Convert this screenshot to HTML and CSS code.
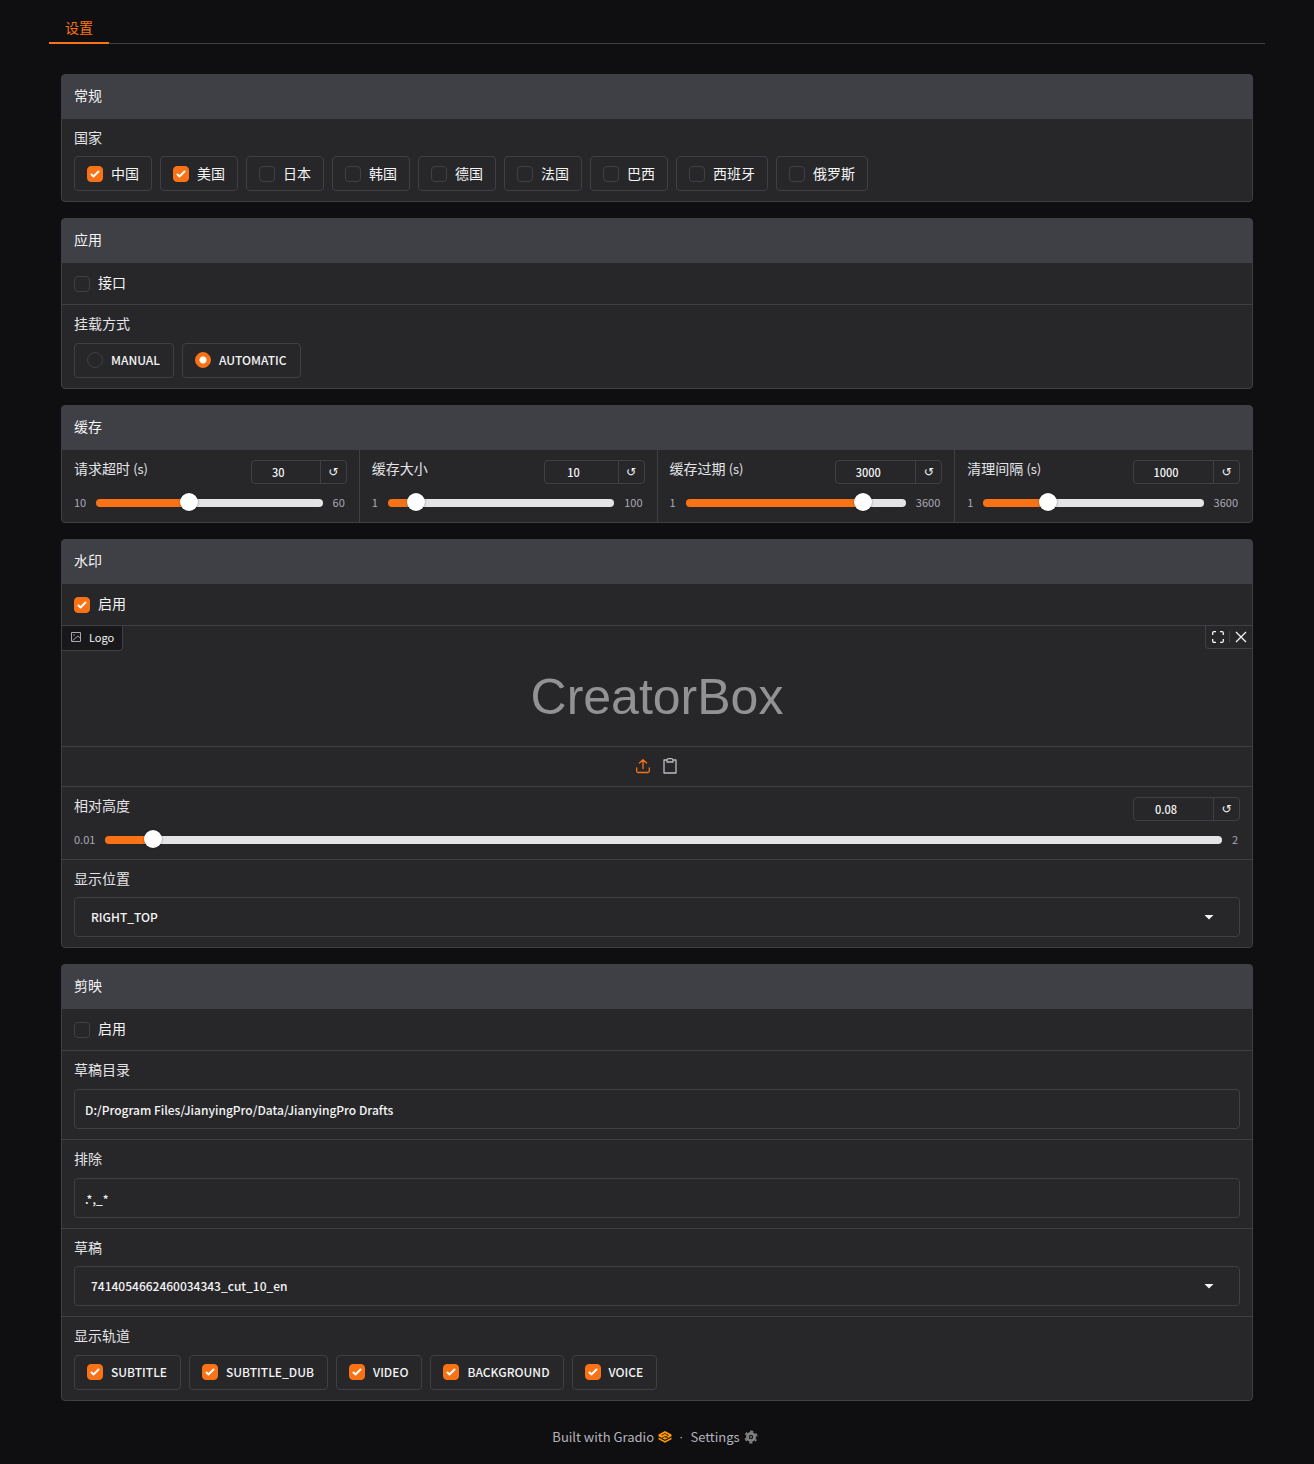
FILE: index.html
```html
<!DOCTYPE html>
<html lang="zh-CN">
<head>
<meta charset="utf-8">
<meta name="viewport" content="width=device-width, initial-scale=1">
<title>设置</title>
<link rel="stylesheet" href="styles.css">
</head>
<body>
<div class="app">
  <nav class="tabs" role="tablist">
    <button class="tab" type="button" role="tab" aria-selected="true">设置</button>
  </nav>

  <main class="page">
    <section class="panel">
      <h2 class="panel-title">常规</h2>
      <div class="block compact" role="group" aria-labelledby="country">
        <span class="block-label" id="country">国家</span>
        <div class="chips">
          <label class="chip"><input class="check" type="checkbox" checked>中国</label>
          <label class="chip"><input class="check" type="checkbox" checked>美国</label>
          <label class="chip"><input class="check" type="checkbox">日本</label>
          <label class="chip"><input class="check" type="checkbox">韩国</label>
          <label class="chip"><input class="check" type="checkbox">德国</label>
          <label class="chip"><input class="check" type="checkbox">法国</label>
          <label class="chip"><input class="check" type="checkbox">巴西</label>
          <label class="chip"><input class="check" type="checkbox">西班牙</label>
          <label class="chip"><input class="check" type="checkbox">俄罗斯</label>
        </div>
      </div>
    </section>

    <section class="panel">
      <h2 class="panel-title">应用</h2>
      <div class="toggle-row"><label class="toggle"><input class="check" type="checkbox">接口</label></div>
      <div class="block" role="radiogroup" aria-labelledby="mount">
        <span class="block-label" id="mount">挂载方式</span>
        <div class="chips latin">
          <label class="chip"><input class="check round" type="radio" name="mount">MANUAL</label>
          <label class="chip"><input class="check round" type="radio" name="mount" checked>AUTOMATIC</label>
        </div>
      </div>
    </section>

    <section class="panel">
      <h2 class="panel-title">缓存</h2>
      <div class="columns">
        <div class="slider">
          <div class="slider-head">
            <label class="block-label" for="timeout">请求超时 <span class="unit">(s)</span></label>
            <div class="number narrow"><input type="text" inputmode="numeric" aria-label="请求超时" value="30"><button type="button" aria-label="重置">↺</button></div>
          </div>
          <div class="slider-body"><span>10</span><input id="timeout" type="range" min="10" max="60" value="30" style="--fill:40%"><span>60</span></div>
        </div>
        <div class="slider">
          <div class="slider-head">
            <label class="block-label" for="size">缓存大小</label>
            <div class="number medium"><input type="text" inputmode="numeric" aria-label="缓存大小" value="10"><button type="button" aria-label="重置">↺</button></div>
          </div>
          <div class="slider-body"><span>1</span><input id="size" type="range" min="1" max="100" value="10" style="--fill:9%"><span>100</span></div>
        </div>
        <div class="slider">
          <div class="slider-head">
            <label class="block-label" for="expire">缓存过期 <span class="unit">(s)</span></label>
            <div class="number"><input type="text" inputmode="numeric" aria-label="缓存过期" value="3000"><button type="button" aria-label="重置">↺</button></div>
          </div>
          <div class="slider-body"><span>1</span><input id="expire" type="range" min="1" max="3600" value="3000" style="--fill:83%"><span>3600</span></div>
        </div>
        <div class="slider">
          <div class="slider-head">
            <label class="block-label" for="clean">清理间隔 <span class="unit">(s)</span></label>
            <div class="number"><input type="text" inputmode="numeric" aria-label="清理间隔" value="1000"><button type="button" aria-label="重置">↺</button></div>
          </div>
          <div class="slider-body"><span>1</span><input id="clean" type="range" min="1" max="3600" value="1000" style="--fill:28%"><span>3600</span></div>
        </div>
      </div>
    </section>

    <section class="panel">
      <h2 class="panel-title">水印</h2>
      <div class="toggle-row"><label class="toggle"><input class="check" type="checkbox" checked>启用</label></div>
      <div class="image-block">
        <div class="image-tag">
          <svg width="10" height="10" viewBox="0 0 10 10" fill="none" stroke="currentColor"><path d="M.5.5h9v9h-9z"/><path d="M1.500 8.500 7 4l2 2" stroke-width=".9"/><path d="M2.300 3h1.500"/></svg>
          <span>Logo</span>
        </div>
        <div class="image-tools">
          <button type="button" aria-label="全屏"><svg width="12" height="12" viewBox="0 0 12 12" fill="none" stroke="currentColor" stroke-width="1.300"><path d="M.7 4V2Q.7.7 2 .7h2M8 .7h2q1.300 0 1.300 1.300v2M11.300 8v2q0 1.300-1.300 1.300H8M4 11.300H2Q.7 11.300.7 10V8"/></svg></button>
          <button type="button" aria-label="清除"><svg width="12" height="12" viewBox="0 0 12 12" fill="none" stroke="currentColor" stroke-width="1.300"><path d="m1 1 10 10M11 1 1 11"/></svg></button>
        </div>
        <div class="image-preview">CreatorBox</div>
      </div>
      <div class="sources">
        <button class="active" type="button" aria-label="上传"><svg width="16" height="16" viewBox="0 0 16 16" fill="none" stroke="currentColor" stroke-width="1.300" stroke-linecap="round" stroke-linejoin="round"><path d="M1.700 10v3q0 1.500 1.500 1.500h9.600q1.500 0 1.500-1.500v-3M8 10.500V2M4.500 5 8 1.700 11.500 5"/></svg></button>
        <button type="button" aria-label="粘贴"><svg width="16" height="16" viewBox="0 0 16 16" fill="none" stroke="currentColor" stroke-width="1.300" stroke-linejoin="round"><path d="M5 2H2v13h12V2h-3"/><path d="M5 2q.2-1.300 1.500-1.300h3Q10.800.7 11 2v2H5z"/></svg></button>
      </div>
      <div class="slider">
        <div class="slider-head">
          <label class="block-label" for="height">相对高度</label>
          <div class="number"><input type="text" inputmode="decimal" aria-label="相对高度" value="0.08"><button type="button" aria-label="重置">↺</button></div>
        </div>
        <div class="slider-body"><span>0.01</span><input id="height" type="range" min="0.01" max="2" step="0.01" value="0.08" style="--fill:4%"><span>2</span></div>
      </div>
      <div class="block compact">
        <label class="block-label" for="position">显示位置</label>
        <div class="select">
          <select id="position" class="field"><option>RIGHT_TOP</option></select>
          <svg width="10" height="5" viewBox="0 0 10 5" fill="currentColor"><path d="M.5 0h9L5 4.500z"/></svg>
        </div>
      </div>
    </section>

    <section class="panel">
      <h2 class="panel-title">剪映</h2>
      <div class="toggle-row"><label class="toggle"><input class="check" type="checkbox">启用</label></div>
      <div class="block">
        <label class="block-label" for="folder">草稿目录</label>
        <input id="folder" class="field" type="text" value="D:/Program Files/JianyingPro/Data/JianyingPro Drafts">
      </div>
      <div class="block">
        <label class="block-label" for="exclude">排除</label>
        <input id="exclude" class="field" type="text" value=".*,_*">
      </div>
      <div class="block compact">
        <label class="block-label" for="draft">草稿</label>
        <div class="select">
          <select id="draft" class="field"><option>7414054662460034343_cut_10_en</option></select>
          <svg width="10" height="5" viewBox="0 0 10 5" fill="currentColor"><path d="M.5 0h9L5 4.500z"/></svg>
        </div>
      </div>
      <div class="block" role="group" aria-labelledby="tracks">
        <span class="block-label" id="tracks">显示轨道</span>
        <div class="chips latin">
          <label class="chip"><input class="check" type="checkbox" checked>SUBTITLE</label>
          <label class="chip"><input class="check" type="checkbox" checked>SUBTITLE_DUB</label>
          <label class="chip"><input class="check" type="checkbox" checked>VIDEO</label>
          <label class="chip"><input class="check" type="checkbox" checked>BACKGROUND</label>
          <label class="chip"><input class="check" type="checkbox" checked>VOICE</label>
        </div>
      </div>
    </section>
  </main>

  <footer class="footer">
    <a href="#gradio">Built with Gradio
      <svg width="14" height="14" viewBox="0 0 14 14"><path d="M7 1 13.500 4.500v1.700L7 9.700.5 6.200V4.500z" fill="#ff9d00"/><path d="M.5 7.500 7 11l6.500-3.500v1.700L7 12.800.5 9.200z" fill="#ff9d00"/><path d="M3.500 5.300 7 3.500l3.500 1.800L7 7.200M3.500 8.200 7 6.500l3.500 1.700" fill="none" stroke="#5a2c00"/></svg>
    </a>
    <span class="dot">·</span>
    <button type="button">Settings
      <svg width="14" height="14" viewBox="0 0 14 14" fill="none" stroke="#808080"><circle cx="7" cy="7" r="3.600" stroke-width="2.800"/><circle cx="7" cy="7" r="5.700" stroke-width="1.800" stroke-dasharray="3 2.970" stroke-dashoffset="1.500" transform="rotate(30 7 7)"/><circle cx="7" cy="7" r=".8" stroke-width="1"/></svg>
    </button>
  </footer>
</div>
</body>
</html>
```
FILE: styles.css
```css
:root {
  --accent: #f97316;
  --bg: #0f0f11;
  --surface: #27272a;
  --line: #3f3f46;
  --text: #f4f4f5;
  --label: #e4e4e7;
  --muted: #a9a9b4;
  --sans: "Noto Sans CJK SC", "Noto Sans", sans-serif;
}

* { box-sizing: border-box; }

body {
  margin: 0;
  background: var(--bg);
  color: var(--text);
  font: 14px/20px var(--sans);
}

button, input, select { font: inherit; color: inherit; margin: 0; }

button {
  display: flex;
  align-items: center;
  justify-content: center;
  padding: 0;
  border: 0;
  background: none;
  cursor: pointer;
}

svg { display: block; flex: none; }

.latin { font-size: 12px; font-weight: 500; }
.unit { font-size: 13px; }

.app { max-width: 1280px; margin: 0 auto; padding: 0 32px; }

.tabs {
  display: flex;
  padding-top: 12px;
  box-shadow: inset 0 -1px var(--line);
}

.tab {
  height: 32px;
  padding: 0 16px;
  border-bottom: 2px solid var(--accent);
  color: var(--accent);
}

.page {
  display: flex;
  flex-direction: column;
  gap: 16px;
  padding: 30px 12px 0;
}

.panel {
  display: flex;
  flex-direction: column;
  gap: 1px;
  overflow: hidden;
  border: 1px solid var(--line);
  border-radius: 4px;
  background: var(--line);
}

.panel > *:not(.panel-title):not(.columns) { background: var(--surface); }

.panel-title {
  margin: 0;
  padding: 10px 12px 12px;
  font-size: 14px;
  font-weight: 400;
  line-height: 21px;
}

.block {
  display: flex;
  flex-direction: column;
  gap: 10px;
  padding: 10px 12px;
}

.block.compact { gap: 9px; }

.block-label {
  padding-bottom: 2px;
  color: var(--label);
  line-height: 16px;
}

.chips { display: flex; flex-wrap: wrap; gap: 8px; }

.chip {
  display: flex;
  align-items: center;
  gap: 8px;
  height: 35px;
  padding: 0 12px 2px;
  border: 1px solid var(--line);
  border-radius: 4px;
}

.latin .chip { padding-right: 13px; }

.toggle-row { display: flex; padding: 9px 12px 11px; }
.toggle { display: flex; align-items: center; gap: 8px; line-height: 21px; }

.check {
  appearance: none;
  flex: none;
  width: 16px;
  height: 16px;
  margin: 2px 0 0;
  border: 1px solid var(--line);
  border-radius: 4px;
}

.latin .check { margin-top: 0; }

.check:checked {
  border-color: var(--accent);
  background: var(--accent) url("data:image/svg+xml,%3Csvg viewBox='0 0 16 16' fill='white' xmlns='http://www.w3.org/2000/svg'%3E%3Cpath d='M12.207 4.793a1 1 0 010 1.414l-5 5a1 1 0 01-1.414 0l-2-2a1 1 0 011.414-1.414L6.500 9.086l4.293-4.293a1 1 0 011.414 0z'/%3E%3C/svg%3E") center / 16px;
}

.check.round { border-radius: 50%; }
.check.round:checked { background: radial-gradient(circle, #fff 0 3px, var(--accent) 4px); }

.columns {
  display: grid;
  grid-template-columns: repeat(4, 1fr);
  gap: 1px;
}

.slider { padding: 10px 12px 11px; background: var(--surface); }

.slider-head {
  display: flex;
  align-items: flex-start;
  justify-content: space-between;
}

.number {
  display: flex;
  width: 107px;
  height: 24px;
  border: 1px solid var(--line);
  border-radius: 4px;
}

.number.narrow { width: 96px; }
.number.medium { width: 101px; }

.number input {
  flex: 1;
  min-width: 0;
  padding: 0 15px 0 0;
  border: 0;
  outline: 0;
  background: none;
  font-size: 11px;
  font-weight: 500;
  text-align: center;
}

.number button {
  width: 26px;
  border-left: 1px solid var(--line);
  font: 12px/20px "DejaVu Sans", sans-serif;
}

.slider-body {
  display: flex;
  align-items: center;
  gap: 10px;
  padding: 11px 2px 0 0;
  color: var(--muted);
  font-size: 11px;
  line-height: 16px;
}

.slider-body span { padding-bottom: 2px; line-height: 14px; }

.slider-body input {
  appearance: none;
  flex: 1;
  min-width: 0;
  height: 8px;
  border-radius: 4px;
  background: linear-gradient(to right, var(--accent) var(--fill), #e4e4e7 var(--fill));
}

.slider-body input::-webkit-slider-runnable-track { height: 8px; }

.slider-body input::-webkit-slider-thumb {
  appearance: none;
  width: 18px;
  height: 18px;
  margin-top: -6px;
  border-radius: 50%;
  background: #fff;
  box-shadow: 0 0 2px rgba(0, 0, 0, .5);
}

.image-block { position: relative; }

.image-tag {
  position: absolute;
  top: 0;
  left: 0;
  display: flex;
  align-items: center;
  gap: 8px;
  height: 25px;
  padding: 0 8px 2px 9px;
  border: solid var(--line);
  border-width: 0 1px 1px 0;
  border-bottom-right-radius: 4px;
  background: #18181b;
  font-size: 11px;
}

.image-tag svg { color: var(--muted); }

.image-tools {
  position: absolute;
  top: 0;
  right: 0;
  display: flex;
  align-items: center;
  height: 23px;
  border: solid var(--line);
  border-width: 0 0 1px 1px;
  border-bottom-left-radius: 4px;
  background: var(--surface);
}

.image-tools button { width: 23px; height: 12px; }
.image-tools button + button { border-left: 1px solid var(--line); }

.image-preview {
  padding-top: 22px;
  color: #929293;
  font: 50px/98px "Liberation Sans", Arial, sans-serif;
  text-align: center;
}

.sources {
  display: flex;
  align-items: center;
  justify-content: center;
  gap: 11px;
  height: 39px;
  padding: 0 2px 2px 0;
}

.sources button { color: #bbbbc2; }
.sources .active { color: var(--accent); }

.field {
  appearance: none;
  display: block;
  width: 100%;
  height: 40px;
  padding: 0 10px;
  border: 1px solid var(--line);
  border-radius: 4px;
  outline: 0;
  background: var(--surface);
  font-size: 12px;
  font-weight: 500;
}

.select { display: grid; align-items: center; }
.select > * { grid-area: 1 / 1; }
.select .field { padding: 0 16px; }
.select svg { justify-self: end; margin-right: 26px; pointer-events: none; }

.footer {
  display: flex;
  align-items: center;
  justify-content: center;
  gap: 7px;
  padding: 26px 4px 16px 0;
  color: #b3b3bb;
  font-size: 13px;
}

.footer a, .footer button {
  display: flex;
  align-items: center;
  gap: 4px;
  color: inherit;
  text-decoration: none;
}

.dot { font-family: "Liberation Sans", Arial, sans-serif; }
```
